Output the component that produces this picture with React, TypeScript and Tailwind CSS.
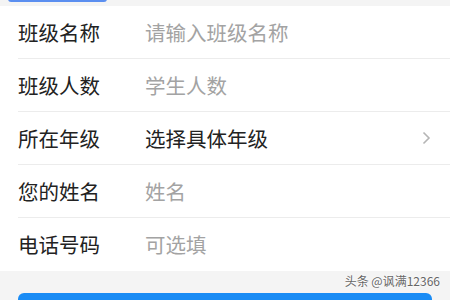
import React from "react";

const rows = [
  { label: "班级名称", value: "请输入班级名称", placeholder: true },
  { label: "班级人数", value: "学生人数", placeholder: true },
  { label: "所在年级", value: "选择具体年级", placeholder: false, arrow: true },
  { label: "您的姓名", value: "姓名", placeholder: true },
  { label: "电话号码", value: "可选填", placeholder: true },
];

const App = () => {
  return (
    <div
      className="w-[450px] h-[300px] overflow-hidden bg-[#f4f4f4] flex flex-col"
      style={{ fontFamily: '"Noto Sans CJK SC", "Noto Sans", sans-serif' }}
    >
      {/* top strip with the end of a previous button */}
      <div className="h-[6px] shrink-0 pl-[8px]">
        <div className="w-[99px] h-[3px] -mt-[1px] rounded-b-[3px] bg-[#5b8ff0]" />
      </div>

      {/* form rows */}
      <div className="bg-white">
        {rows.map((row, i) => (
          <div key={row.label} className="pl-[18px]">
            <div
              className={
                "h-[53px] flex items-center pr-[20px] " +
                (i < rows.length - 1 ? "border-b border-[#ececec]" : "")
              }
            >
              <div className="w-[127px] shrink-0 text-[20.5px] leading-none text-[#222]">
                {row.label}
              </div>
              <div
                className={
                  "flex-1 text-[20.5px] leading-none " +
                  (row.placeholder ? "text-[#a3a3a3]" : "text-[#222]")
                }
              >
                {row.value}
              </div>
              {row.arrow && (
                <svg width="9" height="14" viewBox="0 0 9 14" className="mr-[-1px]">
                  <path d="M1.5 1.5 L7 7 L1.5 12.5" fill="none" stroke="#b5b5b5" strokeWidth="1.6" />
                </svg>
              )}
            </div>
          </div>
        ))}
      </div>
      <div className="h-[1px] bg-[#e6e6e6]" />

      {/* bottom area */}
      <div className="flex-1 relative px-[18px] pt-[22px]">
        <div className="h-[30px] rounded-[6px] bg-[#1a8cf5]" />
        <div
          className="absolute right-[10px] top-[4px] text-[12px] leading-none text-[#666]"
          style={{ textShadow: "0 0 2px #fff, 0 0 2px #fff" }}
        >
          头条 @讽满12366
        </div>
      </div>
    </div>
  );
};

export default App;
